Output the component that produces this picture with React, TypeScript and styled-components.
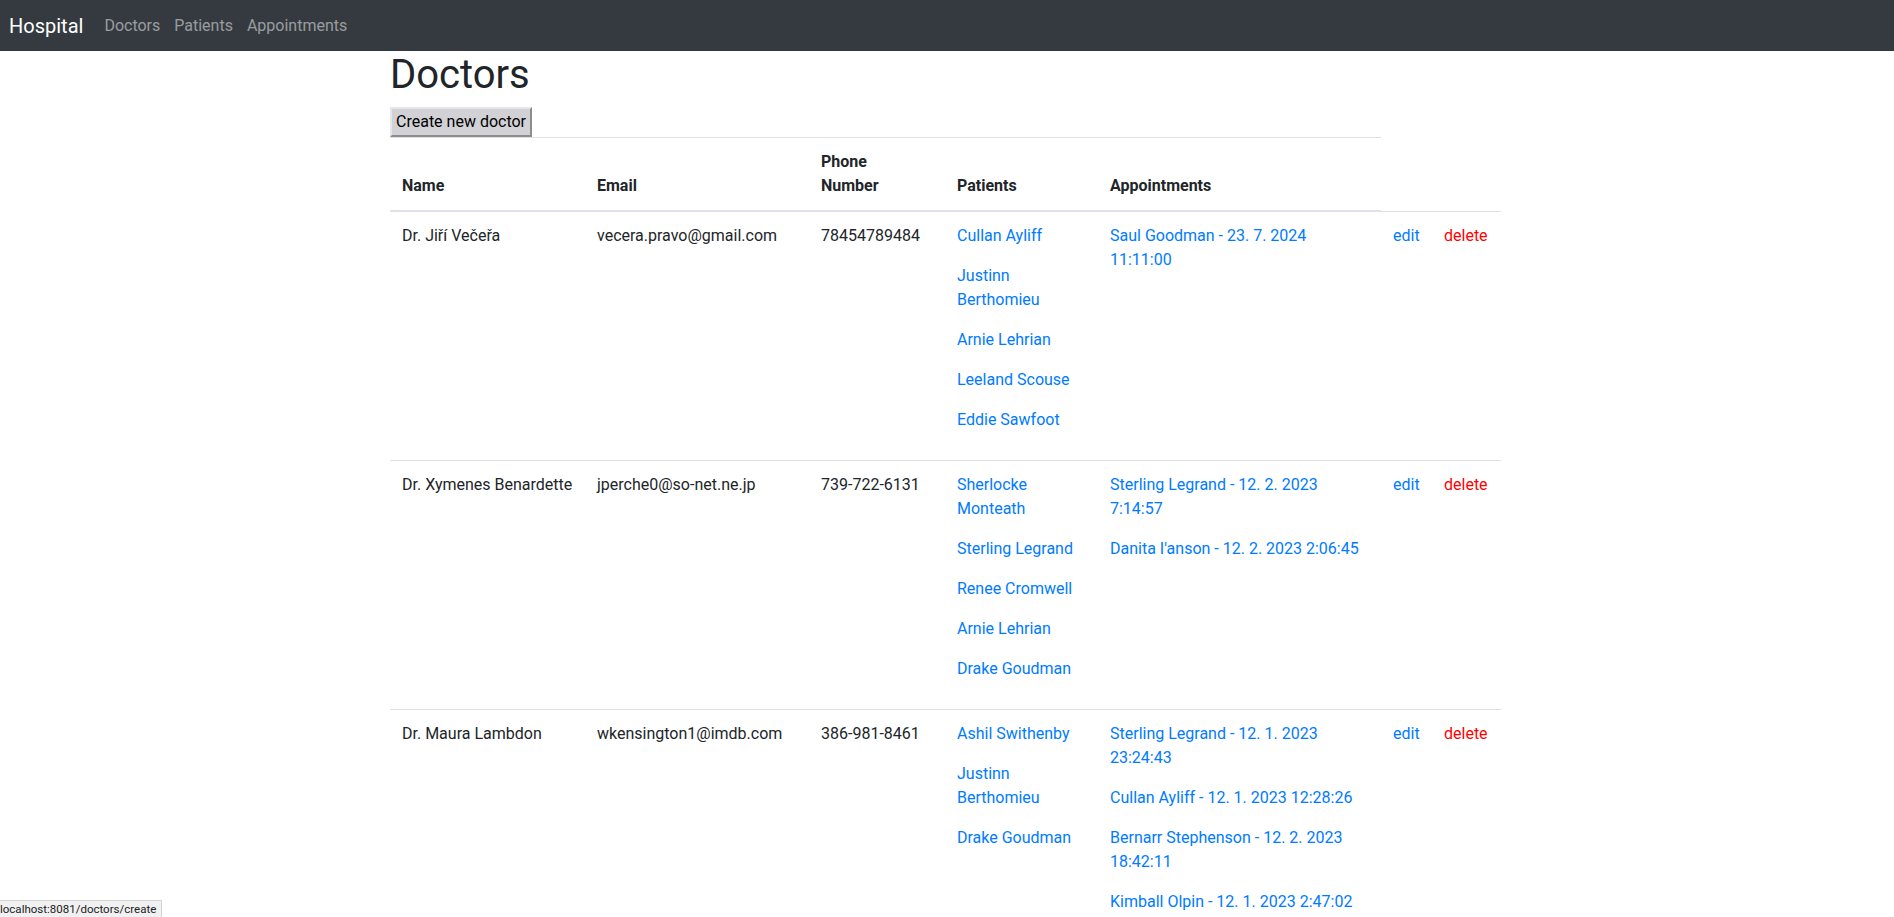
import React from "react";
import { createGlobalStyle, styled } from "styled-components";

const GlobalStyle = createGlobalStyle`
  body {
    margin: 0;
    font-family: "Segoe UI", Roboto, "Helvetica Neue", Arial, "Noto Sans", sans-serif;
    font-size: 16px;
    line-height: 1.5;
    color: #212529;
    background: #fff;
  }
  * {
    box-sizing: border-box;
  }
`;

const Navbar = styled.nav`
  display: flex;
  align-items: center;
  height: 51px;
  padding: 0 9px;
  background-color: #343a40;
`;

const Brand = styled.a`
  font-size: 20px;
  color: #fff;
  text-decoration: none;
  margin-right: 14px;
`;

const NavLink = styled.a`
  padding: 0 7px;
  color: rgba(255, 255, 255, 0.5);
  text-decoration: none;
`;

const Container = styled.main`
  width: 1111px;
  margin: 0 auto 0 calc(50% - 557px);
`;

const Title = styled.h1`
  margin: 0 0 8px;
  font-size: 40px;
  font-weight: 400;
  line-height: 1.2;
`;

const Button = styled.button`
  display: block;
  font: inherit;
  line-height: 24px;
  padding: 1px 4px;
  color: #000;
  background: #d1d1d6;
  border: 2px solid;
  border-color: #e6e6ea #8c8c8c #8c8c8c #e6e6ea;
`;

const Table = styled.table`
  width: 100%;
  border-collapse: collapse;
  table-layout: fixed;
`;

const Th = styled.th`
  padding: 12px;
  text-align: left;
  vertical-align: bottom;
  font-weight: 700;
  border-top: 1px solid #dee2e6;
  border-bottom: 2px solid #dee2e6;
`;

const HeaderLabel = styled.span<{ $stacked?: boolean }>`
  display: inline-block;
  width: ${(p) => (p.$stacked ? "min-content" : "auto")};
`;

const Td = styled.td<{ $nowrap?: boolean }>`
  padding: 12px;
  vertical-align: top;
  border-top: 1px solid #dee2e6;
  white-space: ${(p) => (p.$nowrap ? "nowrap" : "normal")};
`;

const Item = styled.p`
  margin: 0 0 16px;
`;

const Link = styled.a<{ $danger?: boolean }>`
  color: ${(p) => (p.$danger ? "#ff0000" : "#007bff")};
  text-decoration: none;
`;

const StatusBar = styled.div`
  position: fixed;
  left: 0;
  bottom: 0;
  height: 17px;
  padding: 0 5px 0 0;
  white-space: nowrap;
  font-size: 11.5px;
  line-height: 16px;
  color: #202124;
  background: #f1f1f1;
  border-top: 1px solid #d3d3d3;
  border-right: 1px solid #d3d3d3;
`;

const columns = [195, 224, 136, 153, 283, 51, 69];

const doctors = [
  {
    name: "Dr. Jiří Večeřa",
    email: "vecera.pravo@gmail.com",
    phone: "78454789484",
    patients: ["Cullan Ayliff", "Justinn Berthomieu", "Arnie Lehrian", "Leeland Scouse", "Eddie Sawfoot"],
    appointments: ["Saul Goodman - 23. 7. 2024 11:11:00"],
  },
  {
    name: "Dr. Xymenes Benardette",
    email: "jperche0@so-net.ne.jp",
    phone: "739-722-6131",
    patients: ["Sherlocke Monteath", "Sterling Legrand", "Renee Cromwell", "Arnie Lehrian", "Drake Goudman"],
    appointments: ["Sterling Legrand - 12. 2. 2023 7:14:57", "Danita I'anson - 12. 2. 2023 2:06:45"],
  },
  {
    name: "Dr. Maura Lambdon",
    email: "wkensington1@imdb.com",
    phone: "386-981-8461",
    patients: ["Ashil Swithenby", "Justinn Berthomieu", "Drake Goudman"],
    appointments: [
      "Sterling Legrand - 12. 1. 2023 23:24:43",
      "Cullan Ayliff - 12. 1. 2023 12:28:26",
      "Bernarr Stephenson - 12. 2. 2023 18:42:11",
      "Kimball Olpin - 12. 1. 2023 2:47:02",
    ],
  },
];

const App = () => {
  return (
    <>
      <GlobalStyle />
      <Navbar>
        <Brand href="#">Hospital</Brand>
        <NavLink href="#">Doctors</NavLink>
        <NavLink href="#">Patients</NavLink>
        <NavLink href="#">Appointments</NavLink>
      </Navbar>
      <Container>
        <Title>Doctors</Title>
        <Button>Create new doctor</Button>
        <Table>
          <colgroup>
            {columns.map((w, i) => (
              <col key={i} style={{ width: w }} />
            ))}
          </colgroup>
          <thead>
            <tr>
              <Th>Name</Th>
              <Th>Email</Th>
              <Th>
                <HeaderLabel $stacked>Phone Number</HeaderLabel>
              </Th>
              <Th>Patients</Th>
              <Th>Appointments</Th>
            </tr>
          </thead>
          <tbody>
            {doctors.map((d) => (
              <tr key={d.email}>
                <Td $nowrap>{d.name}</Td>
                <Td $nowrap>{d.email}</Td>
                <Td $nowrap>{d.phone}</Td>
                <Td>
                  {d.patients.map((p, i) => (
                    <Item key={i}>
                      <Link href="#">{p}</Link>
                    </Item>
                  ))}
                </Td>
                <Td>
                  {d.appointments.map((a, i) => (
                    <Item key={i}>
                      <Link href="#">{a}</Link>
                    </Item>
                  ))}
                </Td>
                <Td $nowrap>
                  <Link href="#">edit</Link>
                </Td>
                <Td $nowrap>
                  <Link href="#" $danger>delete</Link>
                </Td>
              </tr>
            ))}
          </tbody>
        </Table>
      </Container>
      <StatusBar>localhost:8081/doctors/create</StatusBar>
    </>
  );
};

export default App;
